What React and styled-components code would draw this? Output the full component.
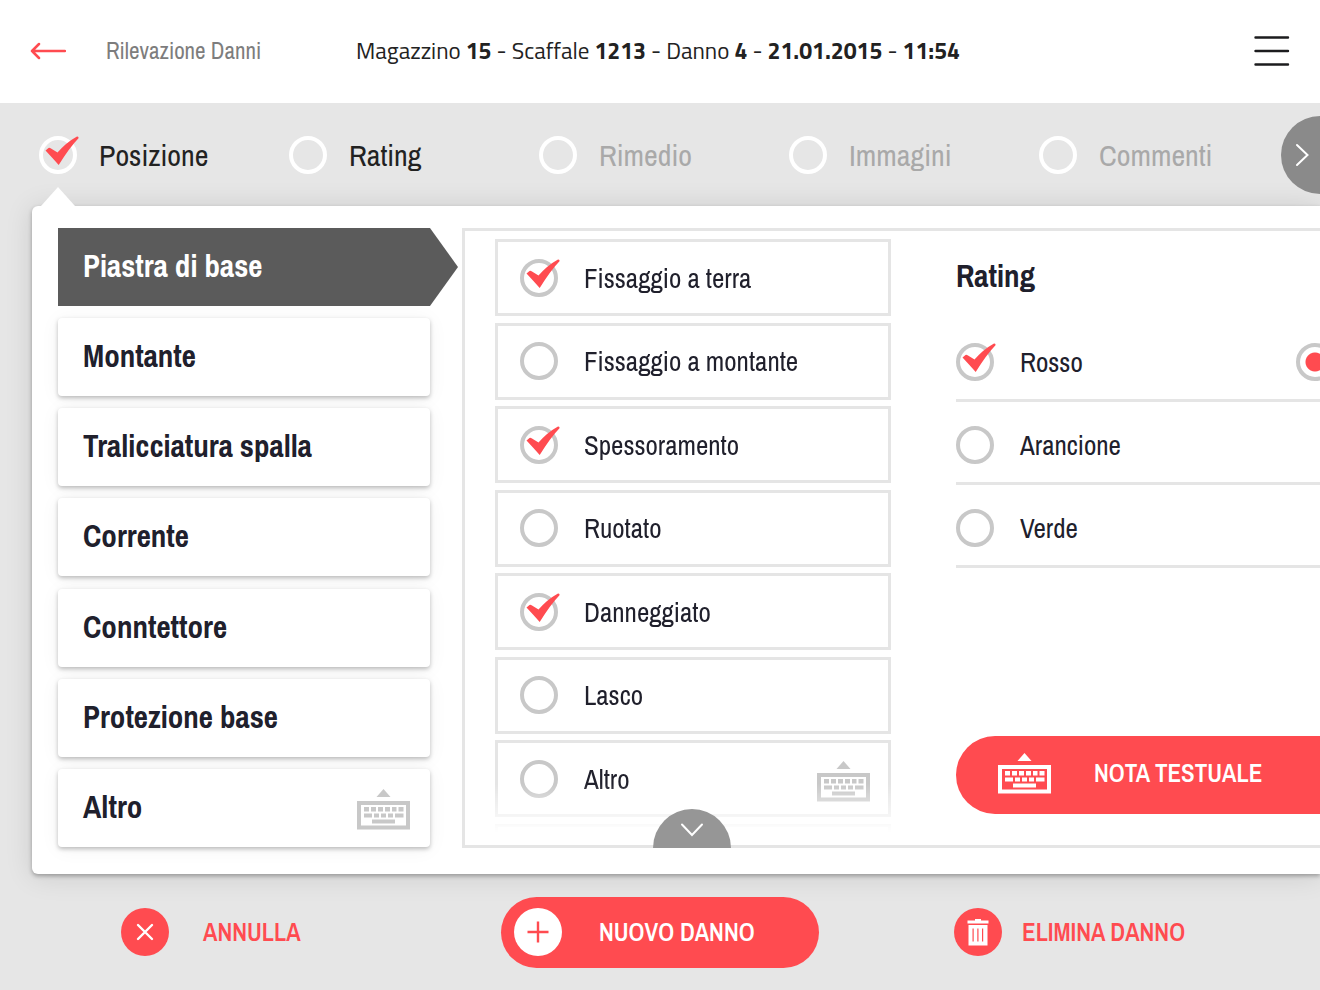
import React, { useState } from 'react';
import styled, { createGlobalStyle } from 'styled-components';

/* Estilos */
const RED = '#ff4b50';
const INK = '#20202c';

const GlobalStyle = createGlobalStyle`
  * {
    box-sizing: border-box;
  }

  body {
    margin: 0;
    background-color: #e6e6e6;
    color: ${INK};
    font-family: 'Archivo Narrow', 'Roboto Condensed', 'Liberation Sans', sans-serif;
  }

  button, input {
    font-family: inherit;
  }
`;

const Page = styled.div`
  display: flex;
  flex-direction: column;
  min-height: 100vh;
  overflow: hidden;
`;

/* Barra superior */
const Header = styled.header`
  display: flex;
  align-items: center;
  height: 103px;
  padding: 0 30px 2px;
  background-color: #ffffff;
`;

const IconButton = styled.button`
  display: flex;
  padding: 0;
  border: none;
  background-color: transparent;
  cursor: pointer;
`;

const Section = styled.span`
  width: 250px;
  margin-left: 40px;
  font-size: 23px;
  line-height: 28px;
  color: #7d7d7d;
`;

const Summary = styled.h1`
  flex: 1;
  margin: 0;
  font-family: 'Titillium Web', Roboto, 'Liberation Sans', sans-serif;
  font-size: 23px;
  font-weight: 400;
  line-height: 28px;
  color: #222222;

  b {
    font-weight: 700;
  }
`;

/* Pasos */
const Steps = styled.nav`
  position: relative;
  display: flex;
  align-items: center;
  height: 103px;
  padding-left: 39px;
`;

const Step = styled.button`
  position: relative;
  display: flex;
  flex: 0 0 250px;
  align-items: center;
  gap: 22px;
  height: 103px;
  padding: 0;
  border: none;
  background-color: transparent;
  font-size: 30px;
  line-height: 36px;
  color: ${props => props.$enabled ? '#222222' : '#a9a9a9'};
  cursor: pointer;
`;

const Pointer = styled.span`
  position: absolute;
  z-index: 1;
  bottom: 0;
  left: 2px;
  border: 17px solid transparent;
  border-top: none;
  border-bottom: 19px solid #ffffff;
`;

const RingBox = styled.span`
  position: relative;
  display: flex;
  flex: none;

  svg {
    position: absolute;
    top: 0;
    left: 5px;
    display: ${props => props.$on ? 'block' : 'none'};
    pointer-events: none;
  }

  input:checked + svg {
    display: block;
  }
`;

const StepRing = styled.span`
  width: 38px;
  height: 38px;
  border: 4px solid #ffffff;
  border-radius: 50%;
`;

const NextButton = styled.button`
  position: absolute;
  top: 13px;
  right: -39px;
  display: flex;
  align-items: center;
  width: 78px;
  height: 78px;
  padding: 0 0 0 14px;
  border: none;
  border-radius: 50%;
  background-color: #8a8a8a;
  cursor: pointer;
`;

/* Panel */
const Panel = styled.main`
  display: grid;
  grid-template-columns: 372px 1fr;
  gap: 32px;
  min-height: 668px;
  margin-left: 32px;
  padding: 22px 0 26px 26px;
  border-radius: 6px 0 0 6px;
  background-color: #ffffff;
  box-shadow: 0 2px 4px rgba(0, 0, 0, .3), 0 2px 28px rgba(0, 0, 0, .12);
`;

const PartList = styled.div`
  display: flex;
  flex-direction: column;
  justify-content: space-between;
  padding-bottom: 1px;
`;

const Part = styled.button`
  display: flex;
  align-items: center;
  justify-content: space-between;
  height: 78px;
  padding: 0 20px 2px 25px;
  border: none;
  border-radius: 4px;
  background-color: #ffffff;
  box-shadow: 0 2px 4px rgba(0, 0, 0, .25), 0 2px 20px rgba(0, 0, 0, .05);
  font-size: 31px;
  font-weight: 700;
  line-height: 36px;
  color: ${INK};
  cursor: pointer;
`;

const ActivePart = styled(Part)`
  margin-right: -28px;
  border-radius: 0;
  background-color: #5b5b5b;
  box-shadow: none;
  clip-path: polygon(0 0, 372px 0, 100% 50%, 372px 100%, 0 100%);
  color: #ffffff;
`;

const NoteIcon = styled.span`
  display: flex;
  padding-top: 5px;
`;

const Detail = styled.section`
  position: relative;
  display: grid;
  grid-template-columns: 396px 1fr;
  gap: 65px;
  padding-left: 30px;
  border: 3px solid #e5e5e5;
  border-right: none;
`;

const DamageList = styled.div`
  display: flex;
  flex-direction: column;
  justify-content: space-between;
  padding: 8px 0 12px;
  mask-image: linear-gradient(#000 90%, rgba(0, 0, 0, .4) 95%, transparent 98%);
`;

const DamageRow = styled.label`
  display: flex;
  align-items: center;
  height: 77px;
  padding: 0 18px 0 22px;
  border: 3px solid #e5e5e5;
  font-size: 27px;
  line-height: 32px;
  cursor: pointer;
`;

const RowPeek = styled.div`
  height: 9px;
  border: 3px solid #e5e5e5;
  border-bottom: none;
`;

const Check = styled.input`
  appearance: none;
  width: 38px;
  height: 38px;
  margin: 0;
  border: 4px solid #c8c8c8;
  border-radius: 50%;
  cursor: pointer;
`;

const Dot = styled(Check)`
  flex: none;

  &:checked {
    background: radial-gradient(circle, ${RED} 9px, transparent 10px);
  }
`;

const CheckText = styled.span`
  flex: 1;
  margin-left: 26px;
`;

const MoreButton = styled.button`
  position: absolute;
  bottom: -3px;
  left: 188px;
  display: flex;
  justify-content: center;
  width: 78px;
  height: 39px;
  padding: 14px 0 0;
  border: none;
  border-radius: 39px 39px 0 0;
  background-color: #969696;
  cursor: pointer;
`;

const Ratings = styled.div`
  display: flex;
  flex-direction: column;
  padding: 27px 0 31px;
  min-width: 0;
`;

const RatingTitle = styled.h2`
  margin: 0 0 25px;
  font-size: 31px;
  font-weight: 700;
  line-height: 36px;
`;

const RatingRow = styled.div`
  display: flex;
  align-items: center;
  height: 83px;
  padding-top: 6px;
  border-bottom: 3px solid #e5e5e5;
`;

const RatingLabel = styled.label`
  display: flex;
  flex: 0 0 340px;
  align-items: center;
  font-size: 27px;
  line-height: 32px;
  cursor: pointer;
`;

const NoteButton = styled.button`
  display: flex;
  align-items: center;
  gap: 43px;
  height: 78px;
  margin-top: auto;
  padding: 0 0 4px 42px;
  border: none;
  border-radius: 39px 0 0 39px;
  background-color: ${RED};
  font-size: 25px;
  font-weight: 600;
  line-height: 30px;
  color: #ffffff;
  white-space: nowrap;
  cursor: pointer;
`;

/* Acciones */
const Footer = styled.footer`
  display: grid;
  grid-template-columns: 1fr 318px 1fr;
  align-items: center;
  height: 116px;
`;

const Action = styled.button`
  display: flex;
  align-items: center;
  gap: ${props => props.$gap}px;
  margin-left: ${props => props.$indent}px;
  padding: 0;
  border: none;
  background-color: transparent;
  font-size: 25px;
  font-weight: 600;
  line-height: 30px;
  color: ${RED};
  cursor: pointer;
`;

const MainAction = styled(Action)`
  height: 71px;
  padding-left: 13px;
  border-radius: 36px;
  background-color: ${RED};
  color: #ffffff;
`;

const Disc = styled.span`
  display: flex;
  align-items: center;
  justify-content: center;
  width: 48px;
  height: 48px;
  border-radius: 50%;
  background-color: ${props => props.$light ? '#ffffff' : RED};
`;

/* Iconos */
const Tick = () => (
  <svg width="36" height="30" viewBox="0 0 36 30" aria-hidden="true">
    <path
      d="M1.500 14.500L4.500 12Q5.500 11.500 7 12.500L13.500 16.500Q22 6.500 33 .4Q35 .2 34.500 2.200Q25.500 11.500 14.700 29Q8.500 22 1.500 14.500Z"
      fill={RED}
    />
  </svg>
);

const BackArrow = () => (
  <svg width="36" height="18" viewBox="0 0 36 18" fill="none" stroke={RED} strokeWidth="2.500" strokeLinecap="round" strokeLinejoin="round">
    <path d="M35 9H2M9 2L2 9L9 16" />
  </svg>
);

const Burger = () => (
  <svg width="36" height="30" viewBox="0 0 36 30" stroke="#1c1c1e" strokeWidth="2.400" strokeLinecap="round">
    <path d="M1.500 1.500H34M1.500 15H34M1.500 28.500H34" />
  </svg>
);

const Keyboard = ({ color }) => (
  <svg width="53" height="41" viewBox="0 0 53 41" fill={color} aria-hidden="true">
    <path d="M26.500 0L33.500 8H19.500Z" />
    <path fillRule="evenodd" d="M0 12H53V40.500H0ZM4 16V36.500H49V16Z" />
    <path d="M7 18h5v4.500h-5zM14 18h5v4.500h-5zM21 18h5v4.500h-5zM28 18h5v4.500h-5zM35 18h4.500v4.500h-4.500zM41.500 18h5v4.500h-5z" />
    <path d="M7 24.500h8v4h-8zM17 24.500h5v4h-5zM24 24.500h5v4h-5zM31 24.500h5v4h-5zM38 24.500h8.500v4h-8.500z" />
    <path d="M15 30.500h23v4h-23z" />
  </svg>
);

const Chevron = ({ down }) => (
  <svg
    width={down ? 24 : 14}
    height={down ? 14 : 24}
    viewBox={down ? '0 0 24 14' : '0 0 14 24'}
    fill="none"
    stroke="#ffffff"
    strokeWidth="2"
    strokeLinecap="round"
  >
    <path d={down ? 'M2 1.500L12 12L22 1.500' : 'M2 2L12.500 12L2 22'} />
  </svg>
);

const Cross = () => (
  <svg width="18" height="18" viewBox="0 0 18 18" stroke="#ffffff" strokeWidth="2.400" strokeLinecap="round">
    <path d="M2 2L16 16M16 2L2 16" />
  </svg>
);

const Plus = () => (
  <svg width="22" height="22" viewBox="0 0 22 22" stroke={RED} strokeWidth="2.400">
    <path d="M11 .5V21.500M.5 11H21.500" />
  </svg>
);

const Trash = () => (
  <svg width="22" height="27" viewBox="0 0 22 27" fill="#ffffff">
    <path d="M8 0h6v1.500h7.500v3h-21v-3h7.500z" />
    <path fillRule="evenodd" d="M1.500 6h19v20.500h-19zM5.500 9.500v13h1.200v-13zM10.300 9.500v13h1.200v-13zM15 9.500v13h1.200v-13z" />
  </svg>
);

/* Datos */
const steps = [
  { name: 'Posizione', enabled: true, done: true },
  { name: 'Rating', enabled: true },
  { name: 'Rimedio' },
  { name: 'Immagini' },
  { name: 'Commenti' },
];

const parts = [
  'Piastra di base',
  'Montante',
  'Tralicciatura spalla',
  'Corrente',
  'Conntettore',
  'Protezione base',
  'Altro',
];

const damages = [
  { name: 'Fissaggio a terra', on: true },
  { name: 'Fissaggio a montante' },
  { name: 'Spessoramento', on: true },
  { name: 'Ruotato' },
  { name: 'Danneggiato', on: true },
  { name: 'Lasco' },
  { name: 'Altro', note: true },
];

const ratings = ['Rosso', 'Arancione', 'Verde'];

/* Componentes */
const CheckRing = ({ on }) => (
  <RingBox>
    <Check type="checkbox" defaultChecked={on} />
    <Tick />
  </RingBox>
);

const App = () => {
  const [part, setPart] = useState(0);

  return (
    <Page>
      <GlobalStyle />
      <Header>
        <IconButton aria-label="Indietro"><BackArrow /></IconButton>
        <Section>Rilevazione Danni</Section>
        <Summary>
          Magazzino <b>15</b> - Scaffale <b>1213</b> - Danno <b>4</b> - <b>21.01.2015</b> - <b>11:54</b>
        </Summary>
        <IconButton aria-label="Menu"><Burger /></IconButton>
      </Header>

      <Steps>
        {steps.map(step => (
          <Step key={step.name} $enabled={step.enabled}>
            <RingBox $on={step.done}>
              <StepRing />
              <Tick />
            </RingBox>
            {step.name}
            {step.done && <Pointer />}
          </Step>
        ))}
        <NextButton aria-label="Avanti"><Chevron /></NextButton>
      </Steps>

      <Panel>
        <PartList>
          {parts.map((name, i) => {
            const Item = i === part ? ActivePart : Part;
            return (
              <Item key={name} onClick={() => setPart(i)}>
                {name}
                {name === 'Altro' && <NoteIcon><Keyboard color="#c8c8c8" /></NoteIcon>}
              </Item>
            );
          })}
        </PartList>

        <Detail>
          <DamageList>
            {damages.map(damage => (
              <DamageRow key={damage.name}>
                <CheckRing on={damage.on} />
                <CheckText>{damage.name}</CheckText>
                {damage.note && <NoteIcon><Keyboard color="#c8c8c8" /></NoteIcon>}
              </DamageRow>
            ))}
            <RowPeek />
          </DamageList>

          <Ratings>
            <RatingTitle>Rating</RatingTitle>
            {ratings.map((name, i) => (
              <RatingRow key={name}>
                <RatingLabel>
                  <CheckRing on={i === 0} />
                  <CheckText>{name}</CheckText>
                </RatingLabel>
                {i === 0 && <Dot type="radio" name="level" aria-label="Livello" defaultChecked />}
              </RatingRow>
            ))}
            <NoteButton>
              <Keyboard color="#ffffff" />
              NOTA TESTUALE
            </NoteButton>
          </Ratings>

          <MoreButton aria-label="Mostra altri"><Chevron down /></MoreButton>
        </Detail>
      </Panel>

      <Footer>
        <Action $gap={34} $indent={121}>
          <Disc><Cross /></Disc>
          ANNULLA
        </Action>
        <MainAction $gap={37} $indent={0}>
          <Disc $light><Plus /></Disc>
          NUOVO DANNO
        </MainAction>
        <Action $gap={20} $indent={135}>
          <Disc><Trash /></Disc>
          ELIMINA DANNO
        </Action>
      </Footer>
    </Page>
  );
};

export default App;
